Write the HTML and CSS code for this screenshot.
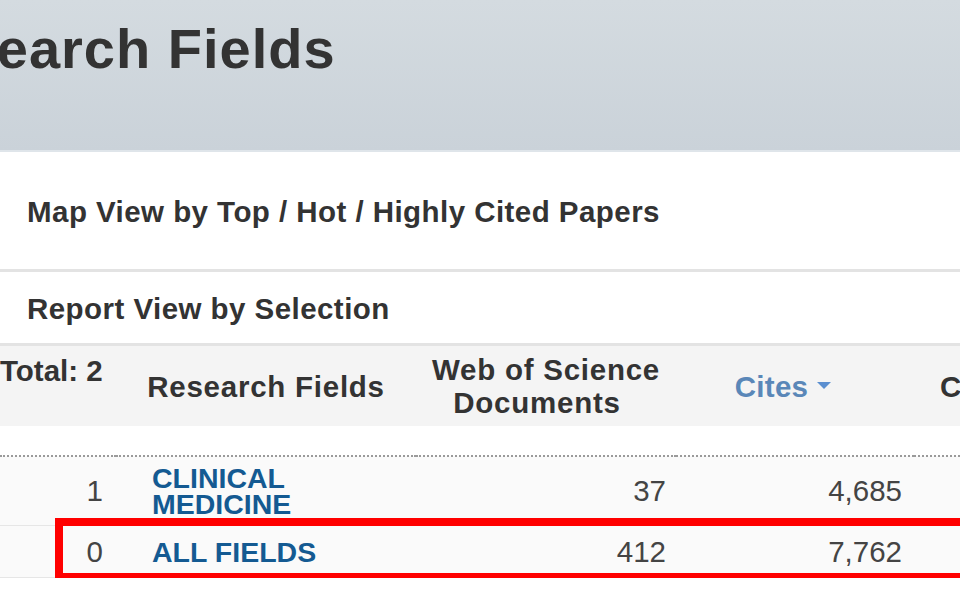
FILE: index.html
```html
<!DOCTYPE html>
<html lang="en">
<head>
<meta charset="utf-8">
<title>Research Fields</title>
<link rel="stylesheet" href="styles.css">
</head>
<body>
<div class="page">
  <header class="banner">
    <h1 class="title">Research Fields</h1>
  </header>
  <section class="panel panel-map">
    <h2 class="panel-title">Map View by Top / Hot / Highly Cited Papers</h2>
  </section>
  <section class="panel panel-report">
    <h2 class="panel-title">Report View by Selection</h2>
  </section>
  <div class="table-wrap">
    <table class="grid">
      <colgroup>
        <col class="c-rank">
        <col class="c-field">
        <col class="c-docs">
        <col class="c-cites">
        <col class="c-more">
      </colgroup>
      <thead>
        <tr>
          <th class="h-total">Total: 2</th>
          <th class="h-field">Research Fields</th>
          <th class="h-docs"><span class="h-line">Web of Science</span><span class="h-line h-line-2">Documents</span></th>
          <th class="h-cites"><span class="sort">Cites</span><span class="caret"></span></th>
          <th class="h-more">Cites/Paper</th>
        </tr>
      </thead>
      <tbody>
        <tr class="spacer"><td colspan="5"></td></tr>
        <tr class="row row-first">
          <td class="num rank">1</td>
          <td class="field"><a href="#">CLINICAL<br>MEDICINE</a></td>
          <td class="num docs">37</td>
          <td class="num cites">4,685</td>
          <td class="num more">126.62</td>
        </tr>
        <tr class="row row-all">
          <td class="num rank">0</td>
          <td class="field"><a href="#">ALL FIELDS</a></td>
          <td class="num docs">412</td>
          <td class="num cites">7,762</td>
          <td class="num more">18.84</td>
        </tr>
      </tbody>
    </table>
    <div class="highlight"></div>
  </div>
</div>
</body>
</html>
```

FILE: styles.css
```css
* { box-sizing: border-box; }

html, body {
  margin: 0;
  padding: 0;
  background: #ffffff;
}

body {
  width: 960px;
  height: 596px;
  overflow: hidden;
  font-family: "Liberation Sans", Arial, sans-serif;
  color: #333333;
}

.page {
  width: 960px;
  overflow: hidden;
}

.banner {
  height: 152px;
  background: linear-gradient(#d4dbe0, #cad2d9);
  border-bottom: 2px solid #dfe5ea;
  padding-top: 21px;
}

.title {
  margin: 0 0 0 -109px;
  font-size: 56px;
  line-height: 56px;
  font-weight: bold;
  letter-spacing: 1px;
  color: #333333;
  white-space: nowrap;
}

.panel {
  background: #ffffff;
  border-bottom: 3px solid #e3e3e3;
}

.panel-map {
  height: 120px;
  padding-top: 45px;
}

.panel-report {
  height: 74px;
  padding-top: 22px;
}

.panel-title {
  margin: 0 0 0 27px;
  font-size: 29.5px;
  line-height: 30px;
  font-weight: bold;
  letter-spacing: 0.45px;
  color: #333333;
  white-space: nowrap;
}

.table-wrap {
  position: relative;
  width: 960px;
}

.grid {
  width: 1120px;
  table-layout: fixed;
  border-collapse: collapse;
  font-size: 29.5px;
}

.c-rank { width: 116px; }
.c-field { width: 300px; }
.c-docs { width: 260px; }
.c-cites { width: 238px; }
.c-more { width: 206px; }

.grid thead tr {
  background: #f4f4f4;
  height: 80px;
}

.grid th {
  padding: 0;
  font-weight: bold;
  line-height: 33px;
  letter-spacing: 0.75px;
  color: #333333;
  vertical-align: middle;
  text-align: center;
  white-space: nowrap;
}

.grid th.h-total {
  text-align: left;
  vertical-align: top;
  padding-top: 8px;
  letter-spacing: 0;
}

.grid th.h-docs {
  padding: 0;
}

.h-line {
  display: block;
}

.h-line-2 {
  margin-right: 18px;
}

.grid th.h-cites {
  padding-right: 24px;
  letter-spacing: 0.3px;
}

.sort {
  color: #5a87b8;
}

.caret {
  display: inline-block;
  width: 0;
  height: 0;
  margin-left: 9px;
  vertical-align: middle;
  position: relative;
  top: -3px;
  border-left: 7.5px solid transparent;
  border-right: 7.5px solid transparent;
  border-top: 7px solid #5b8fd0;
}

.grid th.h-more {
  text-align: left;
  padding-left: 26px;
}

.spacer td {
  height: 30px;
  padding: 0;
  border-bottom: 2px dotted #9a9a9a;
}

.row {
  background: #fafafa;
  border-bottom: 1px solid #e6e6e6;
}

.row td {
  padding: 8px 0;
  line-height: 26px;
  vertical-align: middle;
}

.row-first td { height: 68px; }
.row-all td { height: 52px; }

.num {
  text-align: right;
  color: #444444;
  font-weight: normal;
}

.rank { padding-right: 13px !important; }
.docs { padding-right: 10px !important; }
.cites { padding-right: 12px !important; }
.more { padding-right: 20px !important; }

.field {
  padding-left: 36px !important;
}

.field a {
  color: #145a92;
  font-size: 28.5px;
  font-weight: bold;
  text-decoration: none;
}

.highlight {
  position: absolute;
  left: 55px;
  top: 172px;
  width: 940px;
  height: 63px;
  border: 8px solid #ff0000;
  pointer-events: none;
}
```
